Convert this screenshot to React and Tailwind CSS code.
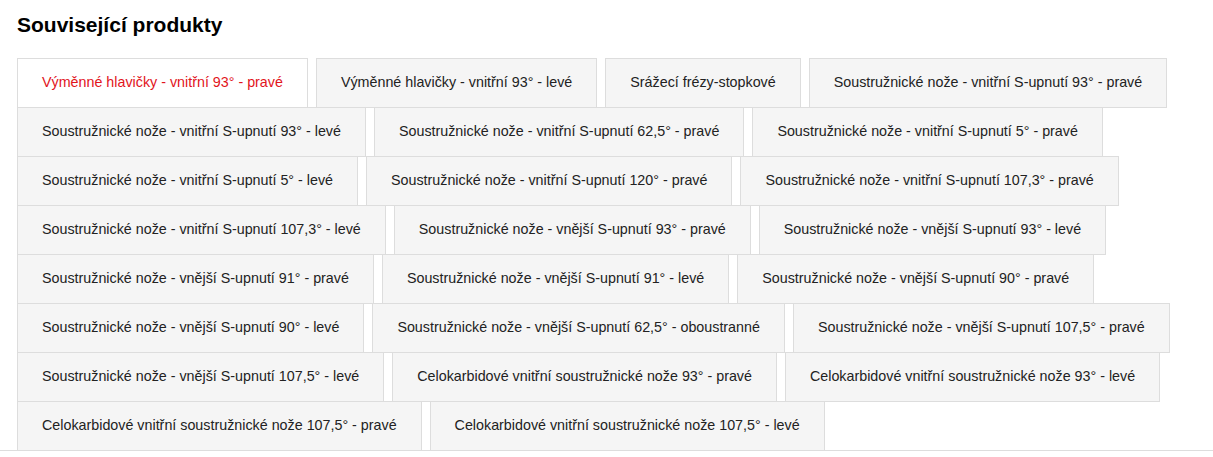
const PRODUCTS = [
  'Výměnné hlavičky - vnitřní 93° - pravé',
  'Výměnné hlavičky - vnitřní 93° - levé',
  'Srážecí frézy-stopkové',
  'Soustružnické nože - vnitřní S-upnutí 93° - pravé',
  'Soustružnické nože - vnitřní S-upnutí 93° - levé',
  'Soustružnické nože - vnitřní S-upnutí 62,5° - pravé',
  'Soustružnické nože - vnitřní S-upnutí 5° - pravé',
  'Soustružnické nože - vnitřní S-upnutí 5° - levé',
  'Soustružnické nože - vnitřní S-upnutí 120° - pravé',
  'Soustružnické nože - vnitřní S-upnutí 107,3° - pravé',
  'Soustružnické nože - vnitřní S-upnutí 107,3° - levé',
  'Soustružnické nože - vnější S-upnutí 93° - pravé',
  'Soustružnické nože - vnější S-upnutí 93° - levé',
  'Soustružnické nože - vnější S-upnutí 91° - pravé',
  'Soustružnické nože - vnější S-upnutí 91° - levé',
  'Soustružnické nože - vnější S-upnutí 90° - pravé',
  'Soustružnické nože - vnější S-upnutí 90° - levé',
  'Soustružnické nože - vnější S-upnutí 62,5° - oboustranné',
  'Soustružnické nože - vnější S-upnutí 107,5° - pravé',
  'Soustružnické nože - vnější S-upnutí 107,5° - levé',
  'Celokarbidové vnitřní soustružnické nože 93° - pravé',
  'Celokarbidové vnitřní soustružnické nože 93° - levé',
  'Celokarbidové vnitřní soustružnické nože 107,5° - pravé',
  'Celokarbidové vnitřní soustružnické nože 107,5° - levé',
]

export default function App() {
  return (
    <div className="bg-white w-[1213px] h-[457px] pt-[10px] font-['Liberation_Sans',Arial,sans-serif]">
      <h2 className="px-[17px] text-[21px] leading-[29px] font-bold text-black">Související produkty</h2>

      {/* Tabs */}
      <ul className="mt-[19px] pl-[17px] pr-[17px] flex flex-wrap gap-x-2 border-b border-[#dddddd]">
        {PRODUCTS.map((name, i) => (
          <li
            key={name}
            className={
              i === 0
                ? 'mb-[-1px] h-[50px] px-6 flex items-center border border-[#dddddd] bg-white text-[14.3px] text-[#e2141c] whitespace-nowrap'
                : 'mb-[-1px] h-[50px] px-6 flex items-center border border-[#dddddd] bg-[#f5f5f5] text-[14.3px] text-[#222222] whitespace-nowrap'
            }
          >
            {name}
          </li>
        ))}
      </ul>
    </div>
  )
}
